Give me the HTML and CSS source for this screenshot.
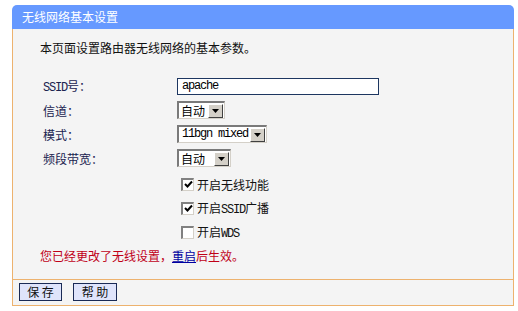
FILE: index.html
```html
<!DOCTYPE html>
<html>
<head>
<meta charset="utf-8">
<link rel="stylesheet" href="styles.css">
</head>
<body>
<div class="frame">
  <div class="head">无线网络基本设置</div>
  <div class="panel">
    <div class="intro">本页面设置路由器无线网络的基本参数。</div>
    <div class="form">
      <div class="row">
        <span class="label"><span class="mono">SSID</span>号：</span>
        <span class="textbox">apache</span>
      </div>
      <div class="row">
        <span class="label">信道：</span>
        <span class="select w48"><span class="val">自动</span><span class="arrow"><svg width="7" height="4" viewBox="0 0 7 4"><path d="M0 0H7L3.5 4Z" fill="#000"/></svg></span></span>
      </div>
      <div class="row">
        <span class="label">模式：</span>
        <span class="select w90"><span class="val mono">11bgn mixed</span><span class="arrow"><svg width="7" height="4" viewBox="0 0 7 4"><path d="M0 0H7L3.5 4Z" fill="#000"/></svg></span></span>
      </div>
      <div class="row">
        <span class="label">频段带宽：</span>
        <span class="select w54"><span class="val">自动</span><span class="arrow"><svg width="7" height="4" viewBox="0 0 7 4"><path d="M0 0H7L3.5 4Z" fill="#000"/></svg></span></span>
      </div>
    </div>
    <div class="checks">
      <div class="crow"><span class="cbox"><svg width="9" height="9" viewBox="0 0 9 9"><path d="M1 4L3.5 6.5L8 1.5" stroke="#000" stroke-width="2" fill="none"/></svg></span><span class="ctext">开启无线功能</span></div>
      <div class="crow"><span class="cbox"><svg width="9" height="9" viewBox="0 0 9 9"><path d="M1 4L3.5 6.5L8 1.5" stroke="#000" stroke-width="2" fill="none"/></svg></span><span class="ctext">开启<span class="mono">SSID</span>广播</span></div>
      <div class="crow"><span class="cbox"></span><span class="ctext">开启<span class="mono">WDS</span></span></div>
    </div>
    <div class="warn">您已经更改了无线设置，<a href="#" class="link">重启</a>后生效。</div>
  </div>
  <div class="foot">
    <button class="btn">保 存</button>
    <button class="btn">帮 助</button>
  </div>
</div>
</body>
</html>
```

FILE: styles.css
```css
* { box-sizing: border-box; }
html, body { margin: 0; background: #fff; }
body {
  padding: 5px 4px 0 12px;
  font-family: "Noto Sans CJK SC", "Liberation Sans", sans-serif;
  font-size: 12px;
  color: #111;
}
.frame { width: 502px; }
.head {
  height: 24px;
  background: #6699ff;
  color: #fff;
  font-size: 12px;
  line-height: 24px;
  padding-left: 10px;
  border-radius: 5px 5px 0 0;
}
.panel {
  background: #f4f4f4;
  border-left: 1px solid #edb26e;
  border-right: 1px solid #edb26e;
  border-bottom: 1px solid #edb26e;
  padding: 7px 0 11px 27px;
}
.intro { line-height: 24px; height: 24px; color: #111; }
.form { margin-top: 14px; padding-left: 3px; }
.row { display: flex; align-items: center; height: 24px; }
.label { width: 134px; color: #1a2350; white-space: nowrap; }
.mono {
  font-family: "Liberation Mono", "DejaVu Sans Mono", monospace;
  font-size: 12px;
  letter-spacing: -1.2px;
}
.textbox {
  width: 202px;
  height: 17px;
  border: 1px solid #1d3660;
  background: #fff;
  font-family: "Liberation Mono", monospace;
  font-size: 12px;
  letter-spacing: -1.2px;
  line-height: 15px;
  padding-left: 4px;
  color: #000;
}
.select {
  display: flex;
  align-items: center;
  height: 18px;
  background: #fff;
  border-top: 2px solid #7a7a7a;
  border-left: 2px solid #7a7a7a;
  border-right: 1px solid #d4d0c8;
  border-bottom: 1px solid #d4d0c8;
  padding-right: 1px;
  white-space: nowrap;
}
.select .val { flex: 1; padding-left: 2px; font-size: 12px; line-height: 15px; color: #000; }
.select .val.mono { font-size: 12px; padding-left: 3px; }
.w48 { width: 48px; }
.w90 { width: 90px; }
.w54 { width: 54px; }
.arrow {
  flex: none;
  width: 15px;
  height: 14px;
  background: #d4d0c8;
  border-top: 1px solid #fff;
  border-left: 1px solid #fff;
  border-right: 1px solid #404040;
  border-bottom: 1px solid #404040;
  display: flex;
  align-items: center;
  justify-content: center;
}
.checks { margin-top: 2px; padding-left: 141px; }
.crow { display: flex; align-items: center; height: 24px; color: #111; }
.ctext { white-space: nowrap; }
.cbox {
  width: 13px;
  height: 13px;
  background: #fff;
  border-top: 2px solid #808080;
  border-left: 2px solid #808080;
  border-right: 1px solid #d4d0c8;
  border-bottom: 1px solid #d4d0c8;
  margin-right: 3px;
  display: flex;
  align-items: center;
  justify-content: center;
}
.warn { height: 24px; line-height: 24px; color: #c00018; }
.link { color: #0000a0; text-decoration: underline; }
.foot {
  height: 26px;
  background: #f4f4f4;
  border-left: 1px solid #edb26e;
  border-right: 1px solid #edb26e;
  border-bottom: 1px solid #edb26e;
  padding: 3px 0 0 6px;
  display: flex;
  align-items: flex-start;
  gap: 11px;
}
.btn {
  width: 43px;
  height: 18px;
  margin: 0;
  padding: 0;
  background: #dfe4fb;
  border: 1px solid #1a2a55;
  font-family: "Noto Sans CJK SC", sans-serif;
  font-size: 12px;
  line-height: 16px;
  color: #111;
}
.btn + .btn { width: 44px; }
```
